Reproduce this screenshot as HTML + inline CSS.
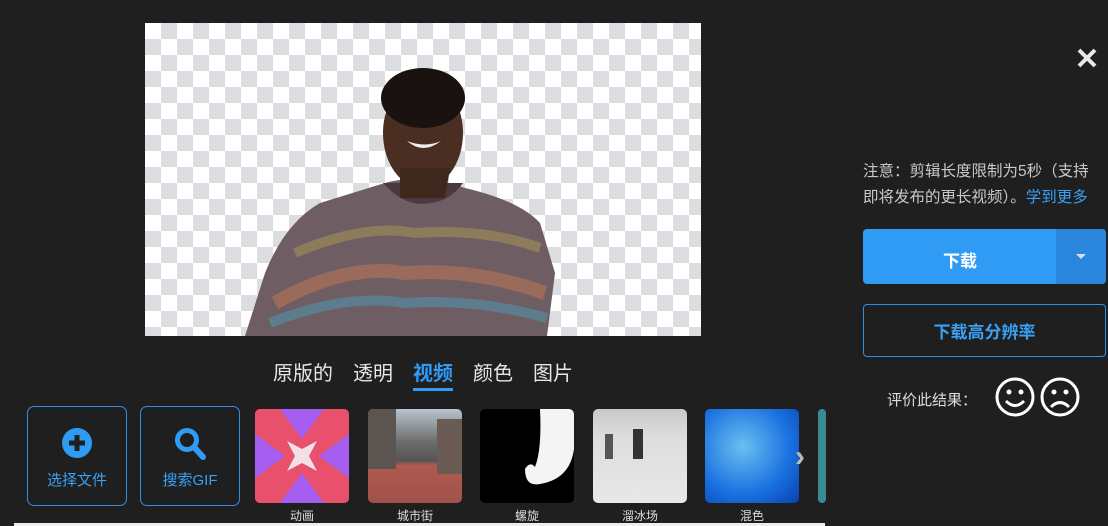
<!DOCTYPE html>
<html><head><meta charset="utf-8"><style>
*{margin:0;padding:0;box-sizing:border-box}
body{width:1108px;height:526px;background:#1f1f1f;font-family:"Liberation Sans","Noto Sans CJK SC",sans-serif;position:relative;overflow:hidden;color:#ddd}
.ck{position:absolute;left:145px;top:23px;width:556px;height:313px;background-color:#fff;background-image:linear-gradient(45deg,#dcdde0 25%,transparent 25%,transparent 75%,#dcdde0 75%),linear-gradient(45deg,#dcdde0 25%,transparent 25%,transparent 75%,#dcdde0 75%);background-size:32px 32px;background-position:0 0,16px 16px;overflow:hidden}
.tabs{position:absolute;top:357px;left:273px;font-size:20px;color:#e6e6e6;white-space:nowrap}
.tabs span{margin-right:20px;display:inline-block}
.tabs .on{color:#2f9bf5;font-weight:bold;border-bottom:3px solid #2f9bf5;padding-bottom:2px}
.btn{position:absolute;top:406px;width:100px;height:100px;border:1px solid #2f8fe6;border-radius:7px;color:#3aa0f5;font-size:15px;text-align:center}
.th{position:absolute;top:409px;width:94px;height:94px;border-radius:5px;overflow:hidden}
.lb{position:absolute;top:507px;font-size:12px;color:#ddd;width:94px;text-align:center}
</style></head><body>
<div class="ck">
<svg width="556" height="313" style="position:absolute;left:0;top:0">
<path d="M100 313 L120 250 Q140 200 175 180 L240 160 Q275 150 320 165 Q375 178 395 200 L410 250 L402 313 Z" fill="#6e5d62"/>
<path d="M130 280 Q200 240 260 250 Q330 245 400 270" stroke="#9a6a5a" stroke-width="14" fill="none"/>
<path d="M125 300 Q200 270 260 280 Q330 275 402 295" stroke="#5d7d8d" stroke-width="10" fill="none"/>
<path d="M150 230 Q220 200 270 210 Q340 205 395 225" stroke="#8c7c5c" stroke-width="10" fill="none"/>
<path d="M238 160 Q260 185 285 180 Q305 178 318 160" fill="#4a3a40"/>
<ellipse cx="278" cy="110" rx="40" ry="55" fill="#4a2e22"/>
<ellipse cx="278" cy="75" rx="42" ry="30" fill="#1a1210"/>
<path d="M255 145 L255 175 L300 175 L305 145Z" fill="#3e271d"/>
<path d="M262 118 Q278 132 296 118 Q280 125 262 118Z" fill="#eee"/>
</svg>
</div>
<div class="tabs"><span>原版的</span><span>透明</span><span class="on">视频</span><span>颜色</span><span>图片</span></div>
<div class="btn" style="left:27px"><svg width="32" height="32" viewBox="0 0 32 32" style="margin-top:20px"><circle cx="16" cy="16" r="15" fill="#2f9bf5"/><path d="M16 8v16M8 16h16" stroke="#1f1f1f" stroke-width="5"/></svg><div style="margin-top:6px">选择文件</div></div>
<div class="btn" style="left:140px"><svg width="32" height="34" viewBox="0 0 32 34" style="margin-top:20px"><circle cx="13" cy="13" r="9.5" fill="none" stroke="#2f9bf5" stroke-width="5"/><path d="M20 20l9 10" stroke="#2f9bf5" stroke-width="6" stroke-linecap="round"/></svg><div style="margin-top:4px">搜索GIF</div></div>
<div class="th" style="left:255px;background:#a55ef0"><svg width="94" height="94"><path d="M0 0h25l22 30 22-30h25v25L64 47l30 22v25H69L47 64 25 94H0V69l30-22L0 25Z" fill="#e8506b"/><path d="M32 32l15 8 15-8-8 15 8 15-15-8-15 8 8-15Z" fill="#f2e0e8"/></svg></div>
<div class="th" style="left:368px;background:linear-gradient(#b8c4d0 0,#6c6c6c 35%,#555 55%,#b05a50 60%,#a0524a 100%)"><div style="position:absolute;left:0;top:0;width:28px;height:60px;background:#5a5550"></div><div style="position:absolute;right:0;top:10px;width:25px;height:55px;background:#6a5c55"></div></div>
<div class="th" style="left:480px;background:#000"><svg width="94" height="94"><path d="M60 0h34v40Q90 70 60 75Q45 78 45 60Q50 52 55 58Q62 40 60 0Z" fill="#f4f4f4"/></svg></div>
<div class="th" style="left:593px;background:linear-gradient(#c8c8c8,#ddd 30%,#e8e8e8)"><div style="position:absolute;left:40px;top:20px;width:10px;height:30px;background:#333"></div><div style="position:absolute;left:12px;top:25px;width:8px;height:25px;background:#555"></div></div>
<div class="th" style="left:705px;background:radial-gradient(circle at 40% 40%,#6ac0f0,#1a70e0 60%,#0a40b0)"></div>
<div class="th" style="left:818px;width:8px;background:#3a8a90"></div>
<div style="position:absolute;left:795px;top:440px;color:#bbb;font-size:30px;font-weight:bold">›</div>
<div class="lb" style="left:255px">动画</div><div class="lb" style="left:368px">城市街</div><div class="lb" style="left:480px">螺旋</div><div class="lb" style="left:593px">溜冰场</div><div class="lb" style="left:705px">混色</div>
<div style="position:absolute;left:14px;top:523px;width:811px;height:3px;background:#eee"></div>
<svg width="22" height="22" style="position:absolute;left:1076px;top:47px"><path d="M3 3l16 16M19 3L3 19" stroke="#e8e8e8" stroke-width="4"/></svg>
<div style="position:absolute;left:863px;top:159px;width:240px;font-size:15.5px;line-height:26px;color:#c8c8c8">注意：剪辑长度限制为5秒（支持即将发布的更长视频）。<span style="color:#3aa0f5">学到更多</span></div>
<div style="position:absolute;left:863px;top:229px;width:243px;height:55px;background:#2f9bf5;border-radius:4px"><div style="position:absolute;left:0;width:194px;text-align:center;top:18px;color:#fff;font-size:17px;font-weight:bold">下载</div><div style="position:absolute;right:0;top:0;width:50px;height:55px;background:#2a86dc;border-radius:0 4px 4px 0"></div><div style="position:absolute;right:20px;top:25px;border:5px solid transparent;border-top:5px solid #dde;border-bottom:0"></div></div>
<div style="position:absolute;left:863px;top:304px;width:243px;height:53px;border:1px solid #2f8fe6;border-radius:4px;text-align:center;line-height:55px;color:#3aa0f5;font-size:17px;font-weight:bold">下载高分辨率</div>
<div style="position:absolute;left:887px;top:389px;font-size:15px;color:#ddd">评价此结果：</div>
<svg width="90" height="44" style="position:absolute;left:995px;top:376px"><circle cx="20" cy="21" r="18" fill="none" stroke="#fff" stroke-width="3"/><circle cx="14" cy="16" r="2.5" fill="#fff"/><circle cx="26" cy="16" r="2.5" fill="#fff"/><path d="M11 25q9 9 18 0" stroke="#fff" stroke-width="3" fill="none"/><circle cx="65" cy="21" r="18" fill="none" stroke="#fff" stroke-width="3"/><circle cx="59" cy="16" r="2.5" fill="#fff"/><circle cx="71" cy="16" r="2.5" fill="#fff"/><path d="M56 31q9-9 18 0" stroke="#fff" stroke-width="3" fill="none"/></svg>
</body></html>
